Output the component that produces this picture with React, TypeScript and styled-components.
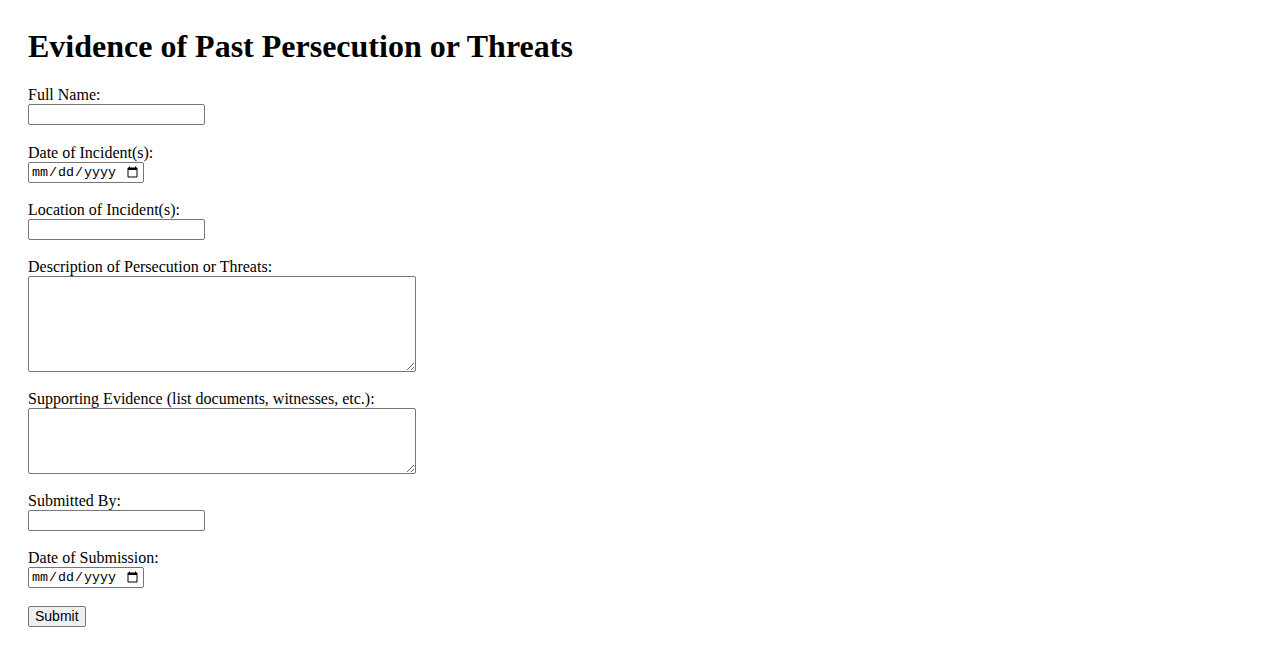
import React from "react";
import styled, { createGlobalStyle } from "styled-components";

const Global = createGlobalStyle`
  html, body { background: #fff; }
  body {
    margin: 8px;
    padding: 20px;
    font-family: "Liberation Serif", "Times New Roman", serif;
    font-size: 16px;
    color: #000;
  }
`;

const Title = styled.h1`
  font-size: 32px;
  font-weight: bold;
  margin: 0 0 21px;
  line-height: 37px;
`;

const Form = styled.form`
  display: flex;
  flex-direction: column;
  align-items: flex-start;
`;

const Field = styled.div`
  display: flex;
  flex-direction: column;
  align-items: flex-start;
  margin-bottom: 18px;

  &:first-child {
    margin-bottom: 19px;
  }
`;

const Label = styled.label`
  display: block;
  line-height: 18px;
`;

const TextInput = styled.input`
  box-sizing: border-box;
  width: 177px;
  height: 21px;
  border: 1px solid #767676;
  border-radius: 2px;
  padding: 1px 2px;
  font: 13.333px "Liberation Sans", Arial, sans-serif;
  background: #fff;
`;

const DateInput = styled.input`
  box-sizing: border-box;
  width: 116px;
  height: 21px;
  border: 1px solid #767676;
  border-radius: 2px;
  padding: 1px 2px;
  font: 13.333px "Liberation Mono", "DejaVu Sans Mono", monospace;
  background: #fff;
  color: #000;
`;

const TextArea = styled.textarea<{ $h: number }>`
  box-sizing: border-box;
  width: 388px;
  height: ${(p) => p.$h}px;
  border: 1px solid #767676;
  border-radius: 2px;
  padding: 2px;
  font: 13.333px "Liberation Mono", monospace;
  background: #fff;
`;

const SubmitButton = styled.button`
  box-sizing: border-box;
  height: 21px;
  padding: 1px 6px;
  border: 1px solid #767676;
  border-radius: 2px;
  background: #efefef;
  font: 14px "Liberation Sans", Arial, sans-serif;
  line-height: 17px;
  color: #000;
`;

export default function App() {
  return (
    <>
      <Global />
      <Title>Evidence of Past Persecution or Threats</Title>
      <Form onSubmit={(e) => e.preventDefault()}>
        <Field>
          <Label htmlFor="fullName">Full Name:</Label>
          <TextInput id="fullName" type="text" />
        </Field>
        <Field>
          <Label htmlFor="dateIncident">Date of Incident(s):</Label>
          <DateInput id="dateIncident" type="date" />
        </Field>
        <Field>
          <Label htmlFor="location">Location of Incident(s):</Label>
          <TextInput id="location" type="text" />
        </Field>
        <Field>
          <Label htmlFor="description">Description of Persecution or Threats:</Label>
          <TextArea id="description" $h={96} />
        </Field>
        <Field>
          <Label htmlFor="evidence">Supporting Evidence (list documents, witnesses, etc.):</Label>
          <TextArea id="evidence" $h={66} />
        </Field>
        <Field>
          <Label htmlFor="submittedBy">Submitted By:</Label>
          <TextInput id="submittedBy" type="text" />
        </Field>
        <Field>
          <Label htmlFor="dateSubmission">Date of Submission:</Label>
          <DateInput id="dateSubmission" type="date" />
        </Field>
        <SubmitButton type="submit">Submit</SubmitButton>
      </Form>
    </>
  );
}
